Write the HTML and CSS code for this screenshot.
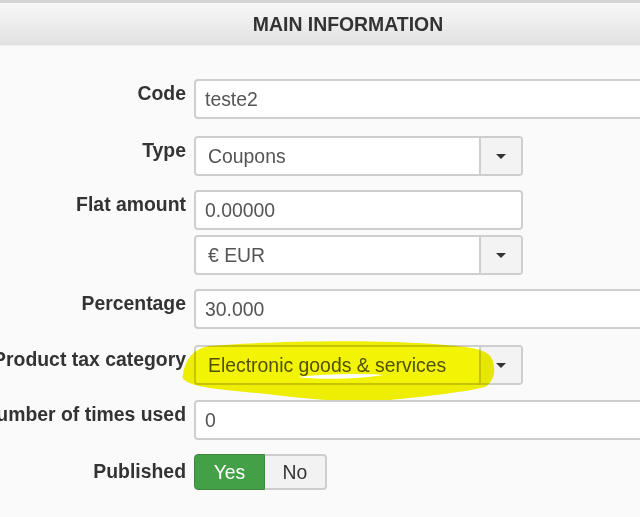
FILE: index.html
```html
<!DOCTYPE html>
<html>
<head>
    <link rel="stylesheet" href="styles.css">
</head>
<body>
    <div class="section-title">MAIN INFORMATION</div>

    <div class="form">
        <div class="row first">
            <div class="label">Code</div>
            <div class="controls">
                <input type="text" class="field wide" value="teste2">
            </div>
        </div>

        <div class="row">
            <div class="label">Type</div>
            <div class="controls">
                <div class="field select"><span>Coupons</span><div class="arrow"><div class="caret"></div></div></div>
            </div>
        </div>

        <div class="row">
            <div class="label">Flat amount</div>
            <div class="controls">
                <input type="text" class="field" value="0.00000">
                <div class="field select"><span>&euro; EUR</span><div class="arrow"><div class="caret"></div></div></div>
            </div>
        </div>

        <div class="row before-marked">
            <div class="label">Percentage</div>
            <div class="controls">
                <input type="text" class="field wide" value="30.000">
            </div>
        </div>

        <div class="row marked">
            <div class="label">Product tax category</div>
            <div class="controls">
                <div class="field select"><span>Electronic goods &amp; services</span><div class="arrow"><div class="caret"></div></div></div>
            </div>
            <!-- highlighter scribble over the select -->
            <svg class="scribble" width="320" height="68" viewBox="0 0 320 68">
                <path fill="#f3f305" d="M3,36 C5,20 14,9 30,7 C90,2 200,0 265,6 C290,8 308,10 312,20 C316,30 315,42 305,48 C280,54 240,58 200,62 C170,64 130,60 95,56 C60,52 25,50 12,45 C4,42 1,39 3,36 Z"/>
                <path fill="#ffffff" d="M118,38 C140,35 180,34 204,36 C180,40 140,41 118,38 Z"/>
            </svg>
        </div>

        <div class="row">
            <div class="label">Number of times used</div>
            <div class="controls">
                <input type="text" class="field wide" value="0">
            </div>
        </div>

        <div class="row">
            <div class="label low">Published</div>
            <div class="controls">
                <div class="toggle">
                    <div class="opt yes">Yes</div>
                    <div class="opt no">No</div>
                </div>
            </div>
        </div>
    </div>
</body>
</html>
```

FILE: styles.css
```css
body {
    margin: 0;
    background-color: #fafafa;
    font-family: "Liberation Sans", Arial, sans-serif;
    color: #333;
    overflow: hidden;
}

.section-title {
    border-top: 3px solid #d6d6d6;
    border-bottom: 1px solid #f0f0f0;
    height: 42px;
    line-height: 42px;
    padding-left: 56px;
    text-align: center;
    font-size: 19.4px;
    font-weight: bold;
    color: #333;
    background: linear-gradient(#f8f8f8, #e1e1e1);
}

.form {
    padding-top: 33px;
}

.row {
    position: relative;
    display: grid;
    grid-template-columns: 186px 1fr;
    column-gap: 8px;
    margin-bottom: 14px;
}
.row.first {
    margin-bottom: 17px;
}
.row.before-marked {
    margin-bottom: 16px;
}
.row.marked {
    margin-bottom: 15px;
}

.label {
    display: flex;
    justify-content: flex-end;
    white-space: nowrap;
    font-size: 19.4px;
    font-weight: bold;
    line-height: 19px;
    padding-top: 5px;
}
.label.low {
    padding-top: 8px;
}

.controls {
    display: flex;
    flex-direction: column;
    gap: 5px;
}

.field {
    box-sizing: border-box;
    width: 329px;
    height: 40px;
    margin: 0;
    padding: 0 9px;
    border: 2px solid #cecece;
    border-radius: 4px;
    background-color: #fff;
    font-family: "Liberation Sans", Arial, sans-serif;
    font-size: 19.4px;
    color: #555;
    outline: none;
}
.field.wide {
    width: 520px;
}

.select {
    display: flex;
    align-items: center;
    padding: 0 0 0 12px;
    overflow: hidden;
}
.select .arrow {
    margin-left: auto;
    width: 40px;
    height: 100%;
    display: flex;
    justify-content: center;
    align-items: center;
    background-color: #f3f3f3;
    border-left: 2px solid #cecece;
}
.caret {
    width: 0;
    height: 0;
    border-top: 5px solid #333;
    border-left: 5px solid transparent;
    border-right: 5px solid transparent;
}

.toggle {
    display: flex;
    height: 36px;
}
.opt {
    box-sizing: border-box;
    display: flex;
    justify-content: center;
    align-items: center;
    font-size: 19.4px;
}
.opt.yes {
    width: 71px;
    color: #fff;
    background-color: #44a047;
    border: 1px solid #3a8a3d;
    border-radius: 4px 0 0 4px;
}
.opt.no {
    width: 62px;
    color: #333;
    background-color: #f2f2f2;
    border: 2px solid #cecece;
    border-left: none;
    border-radius: 0 4px 4px 0;
}

.scribble {
    position: absolute;
    left: 180px;
    top: -6px;
    mix-blend-mode: multiply;
    pointer-events: none;
}
```
